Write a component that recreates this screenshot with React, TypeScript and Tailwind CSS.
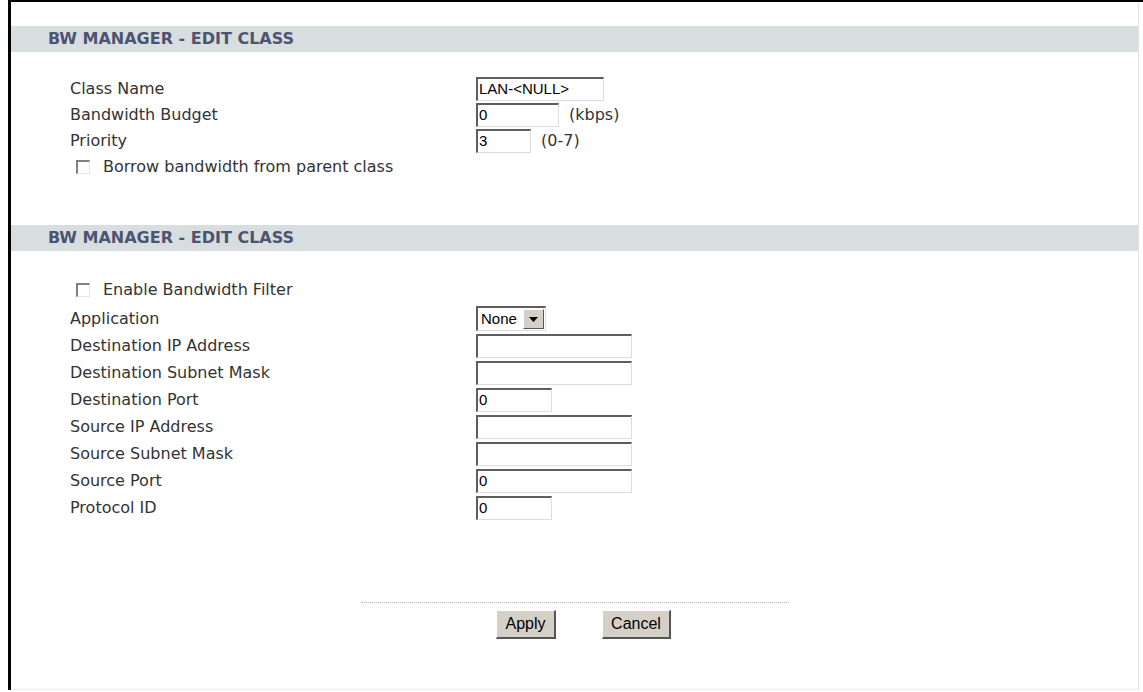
import React from 'react';

const verdana = { fontFamily: '"DejaVu Sans", Verdana, sans-serif' };

const Header = ({ title }: { title: string }) => (
  <div className="h-[26px] bg-[#d8dee0] flex items-center pl-[37px]">
    <span className="text-[16px] font-bold text-[#4d5470]" style={verdana}>
      {title}
    </span>
  </div>
);

const TextBox = ({ value = '', width }: { value?: string; width: string }) => (
  <div
    className={`${width} h-[24px] bg-white border-t-2 border-l-2 border-t-[#5e5e5e] border-l-[#5e5e5e] border-b border-r border-b-[#dcdcdc] border-r-[#dcdcdc] flex items-center pl-[1px] text-[15px] text-black`}
    style={{ fontFamily: '"Liberation Sans", Arial, sans-serif' }}
  >
    {value}
  </div>
);

const Row = ({ label, h, children }: { label: string; h: string; children?: React.ReactNode }) => (
  <div className={`${h} flex items-center`}>
    <div className="w-[465px] shrink-0 pl-[59px] text-[16px] text-[#333]" style={verdana}>
      {label}
    </div>
    <div className="flex items-center">{children}</div>
  </div>
);

const Check = ({ label, h }: { label: string; h: string }) => (
  <div className={`${h} flex items-center pl-[65px]`}>
    <div className="w-[14px] h-[14px] bg-white border-t-2 border-l-2 border-t-[#808080] border-l-[#808080] border-b border-r border-b-[#e6e6e6] border-r-[#e6e6e6]" />
    <span className="ml-[13px] text-[16px] text-[#333]" style={verdana}>
      {label}
    </span>
  </div>
);

const Unit = ({ text }: { text: string }) => (
  <span className="ml-[10px] text-[16px] text-[#333]" style={verdana}>
    {text}
  </span>
);

const Button = ({ label, width }: { label: string; width: string }) => (
  <div
    className={`${width} h-[29px] bg-[#d4d0c8] border-t border-l border-t-white border-l-white border-b-2 border-r-2 border-b-[#555] border-r-[#555] flex items-center justify-center text-[16px] text-black`}
    style={{ fontFamily: '"Liberation Sans", Arial, sans-serif' }}
  >
    {label}
  </div>
);

export default function App() {
  return (
    <div className="w-[1143px] h-[692px] bg-white pl-[8px]">
      <div className="w-[1135px] h-[690px] border-l-[3px] border-t-[2px] border-black">
        <div className="w-[1128px] h-[688px] border-r border-r-[#e4e4e4] border-b border-b-[#f2ecf2] pt-[24px]">
          <Header title="BW MANAGER - EDIT CLASS" />
          <div className="pt-[24px]">
            <Row label="Class Name" h="h-[26px]">
              <TextBox value="LAN-<NULL>" width="w-[128px]" />
            </Row>
            <Row label="Bandwidth Budget" h="h-[26px]">
              <TextBox value="0" width="w-[83px]" />
              <Unit text="(kbps)" />
            </Row>
            <Row label="Priority" h="h-[26px]">
              <TextBox value="3" width="w-[55px]" />
              <Unit text="(0-7)" />
            </Row>
            <Check label="Borrow bandwidth from parent class" h="h-[26px]" />
          </div>
          <div className="mt-[45px]">
            <Header title="BW MANAGER - EDIT CLASS" />
          </div>
          <div className="pt-[25px]">
            <Check label="Enable Bandwidth Filter" h="h-[28px]" />
            <div className="mt-[1px]">
              <Row label="Application" h="h-[27px]">
                <div className="w-[70px] h-[25px] bg-white border-t-2 border-l-2 border-t-[#5e5e5e] border-l-[#5e5e5e] border-b border-r border-b-[#dcdcdc] border-r-[#dcdcdc] flex items-stretch">
                  <span
                    className="flex-1 flex items-center pl-[3px] text-[15px] text-black"
                    style={{ fontFamily: '"Liberation Sans", Arial, sans-serif' }}
                  >
                    None
                  </span>
                  <div className="w-[21px] my-[1px] mr-[1px] bg-[#d4d0c8] border-t border-l border-t-white border-l-white border-b border-r border-b-[#555] border-r-[#555] flex items-center justify-center">
                    <svg width="9" height="5" viewBox="0 0 9 5">
                      <path d="M0 0h9L4.5 5z" fill="#000" />
                    </svg>
                  </div>
                </div>
              </Row>
              <Row label="Destination IP Address" h="h-[27px]">
                <TextBox width="w-[156px]" />
              </Row>
              <Row label="Destination Subnet Mask" h="h-[27px]">
                <TextBox width="w-[156px]" />
              </Row>
              <Row label="Destination Port" h="h-[27px]">
                <TextBox value="0" width="w-[76px]" />
              </Row>
              <Row label="Source IP Address" h="h-[27px]">
                <TextBox width="w-[156px]" />
              </Row>
              <Row label="Source Subnet Mask" h="h-[27px]">
                <TextBox width="w-[156px]" />
              </Row>
              <Row label="Source Port" h="h-[27px]">
                <TextBox value="0" width="w-[156px]" />
              </Row>
              <Row label="Protocol ID" h="h-[27px]">
                <TextBox value="0" width="w-[76px]" />
              </Row>
            </div>
          </div>
          <div className="mt-[81px] flex justify-center">
            <div className="w-[428px] border-t border-dotted border-t-[#b4b4b4]" />
          </div>
          <div className="mt-[7px] flex pl-[485px] gap-[46px]">
            <Button label="Apply" width="w-[60px]" />
            <Button label="Cancel" width="w-[69px]" />
          </div>
        </div>
      </div>
    </div>
  );
}
